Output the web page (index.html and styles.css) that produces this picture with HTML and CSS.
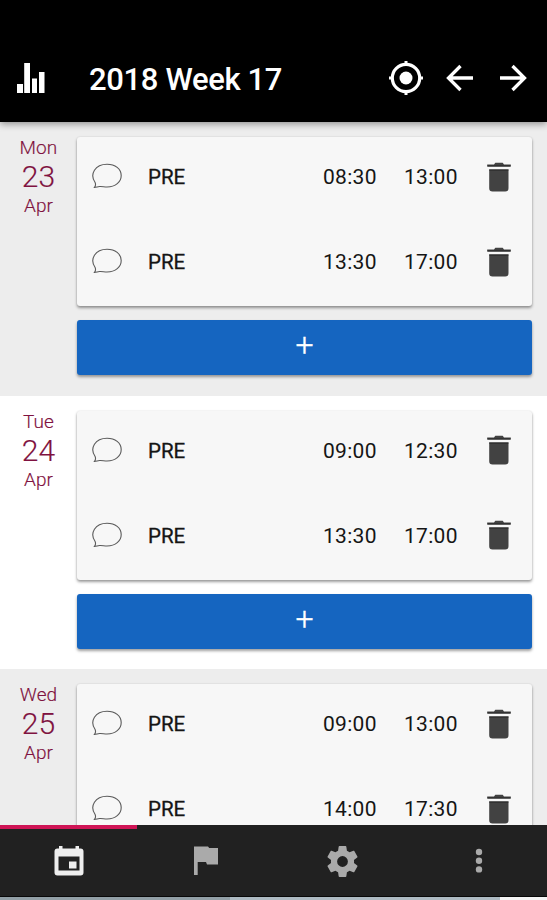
FILE: index.html
```html
<!DOCTYPE html>
<html lang="en">
<head>
<meta charset="utf-8">
<title>2018 Week 17</title>
<link rel="stylesheet" href="styles.css">
</head>
<body>
<svg width="0" height="0" class="defs">
  <symbol id="bubble" viewBox="0 0 32 28"><path d="M4 20.2C-1.500 12.500 4 2.200 16 2.200c8.200 0 14.200 4.800 14.200 11.300S24.500 25 16 25c-2.700 0-5-.7-7.200-.5-1.700-.1-3.300.8-5.300.9C4.500 24.100 4.900 22.200 4 20.200z" fill="none" stroke="#5a5a5a" stroke-width="1.100"/></symbol>
  <symbol id="trash" viewBox="0 0 24 30"><path d="M.2 2.500h6.800L8.300.7h7.400L17 2.500h6.800v2.100H.2zM2.200 7.500h19.300v18.700q0 3.300-3.300 3.300H5.500q-3.300 0-3.300-3.300z" fill="#424242"/><path d="M.5 4h23M2.200 8h19.300" stroke="#222" stroke-width="1"/></symbol>
</svg>
<div class="app">
  <header class="header">
    <svg class="stats" viewBox="0 0 28 30"><path d="M0 21h6v9H0zM7.200 0H13v30H7.200zM15 15.500h5V30h-5zM22 9h5.500v21H22z" fill="#fff"/></svg>
    <h1>2018 Week 17</h1>
    <svg class="locate" viewBox="0 0 36 36"><g fill="none" stroke="#fff"><circle cx="18" cy="18" r="13.700" stroke-width="3.200"/><path d="M18 1v4M18 31v4M1 18h4M31 18h4" stroke-width="3"/></g><circle cx="18" cy="18" r="6.500" fill="#fff"/></svg>
    <svg class="arrow" viewBox="0 0 28 28"><path d="M27 14H3M14.500 2L2.500 14l12 12" fill="none" stroke="#fff" stroke-width="3.300"/></svg>
    <svg class="arrow" viewBox="0 0 28 28"><path d="M1 14h24M13.500 2l12 12-12 12" fill="none" stroke="#fff" stroke-width="3.300"/></svg>
  </header>
  <main class="days">
    <section class="day">
      <div class="date"><span>Mon</span><strong>23</strong><span>Apr</span></div>
      <div class="content">
        <div class="card">
          <div class="entry"><svg class="bubble"><use href="#bubble"/></svg><span>PRE</span><time>08:30</time><time>13:00</time><svg class="trash"><use href="#trash"/></svg></div>
          <div class="entry"><svg class="bubble"><use href="#bubble"/></svg><span>PRE</span><time>13:30</time><time>17:00</time><svg class="trash"><use href="#trash"/></svg></div>
        </div>
        <button class="add">+</button>
      </div>
    </section>
    <section class="day white">
      <div class="date"><span>Tue</span><strong>24</strong><span>Apr</span></div>
      <div class="content">
        <div class="card">
          <div class="entry"><svg class="bubble"><use href="#bubble"/></svg><span>PRE</span><time>09:00</time><time>12:30</time><svg class="trash"><use href="#trash"/></svg></div>
          <div class="entry"><svg class="bubble"><use href="#bubble"/></svg><span>PRE</span><time>13:30</time><time>17:00</time><svg class="trash"><use href="#trash"/></svg></div>
        </div>
        <button class="add">+</button>
      </div>
    </section>
    <section class="day">
      <div class="date"><span>Wed</span><strong>25</strong><span>Apr</span></div>
      <div class="content">
        <div class="card">
          <div class="entry"><svg class="bubble"><use href="#bubble"/></svg><span>PRE</span><time>09:00</time><time>13:00</time><svg class="trash"><use href="#trash"/></svg></div>
          <div class="entry"><svg class="bubble"><use href="#bubble"/></svg><span>PRE</span><time>14:00</time><time>17:30</time><svg class="trash"><use href="#trash"/></svg></div>
        </div>
      </div>
    </section>
  </main>
  <nav class="tabs">
    <a class="tab active"><svg width="30" height="30" viewBox="0 0 30 30"><path fill-rule="evenodd" d="M5 0h3.500v2.500h13V0H25v2.500h1.500q3 0 3 3v21q0 3-3 3h-23q-3 0-3-3v-21q0-3 3-3H5zM4.500 10.500v14h21v-14zM15 15.500h7.500v7H15z" fill="#eee"/></svg></a>
    <a class="tab"><svg width="26" height="30" viewBox="0 0 26 30"><path d="M1 .5h14l1.200 1.500H25v16.500H14L13 16H4.700v13H1z" fill="#aaa"/></svg></a>
    <a class="tab"><svg width="37" height="37" viewBox="0 0 24 24"><path fill="#aaa" d="M19.430 12.980c.04-.32.07-.64.07-.98s-.03-.66-.07-.98l2.110-1.650c.19-.15.24-.42.12-.64l-2-3.460c-.12-.22-.39-.3-.61-.22l-2.490 1c-.52-.4-1.080-.73-1.690-.98l-.38-2.650C14.460 2.180 14.250 2 14 2h-4c-.25 0-.46.18-.49.42l-.38 2.650c-.61.25-1.170.59-1.690.98l-2.490-1c-.23-.09-.49 0-.61.22l-2 3.460c-.13.22-.07.49.12.64l2.110 1.650c-.04.32-.07.65-.07.98s.03.66.07.98l-2.110 1.650c-.19.15-.24.42-.12.64l2 3.460c.12.22.39.3.61.22l2.490-1c.52.4 1.080.73 1.690.98l.38 2.650c.03.24.24.42.49.42h4c.25 0 .46-.18.49-.42l.38-2.650c.61-.25 1.170-.59 1.690-.98l2.490 1c.23.09.49 0 .61-.22l2-3.460c.12-.22.07-.49-.12-.64zM12 15.500A3.500 3.500 0 1 1 12 8.500a3.500 3.500 0 0 1 0 7z"/></svg></a>
    <a class="tab"><svg width="8" height="26" viewBox="0 0 8 26"><g fill="#aaa"><circle cx="4" cy="4" r="3.200"/><circle cx="4" cy="12.700" r="3.200"/><circle cx="4" cy="21.400" r="3.200"/></g></svg></a>
  </nav>
  <div class="strip"><i></i><i></i><i></i></div>
</div>
</body>
</html>
```
FILE: styles.css
```css
* { box-sizing: border-box; }
body { margin: 0; font-family: Roboto, sans-serif; background: #ededed; }
.defs { display: block; height: 0; }
.app { width: 547px; height: 900px; display: flex; flex-direction: column; overflow: hidden; }
.header { flex: none; height: 122px; background: #000; display: flex; align-items: center; padding: 33px 20px 0 17px; box-shadow: 0 2px 7px rgba(0,0,0,.4); z-index: 1; }
.stats { width: 28px; height: 30px; margin-right: 44px; }
h1 { margin: 5px auto 0 0; color: #fff; font-size: 31px; font-weight: 500; line-height: 36px; letter-spacing: -.35px; }
.locate { width: 36px; height: 36px; margin-right: 22px; }
.arrow { width: 28px; height: 28px; }
.arrow + .arrow { margin-left: 25px; }
.days { flex: 1; min-height: 0; overflow: hidden; }
.day { height: 273.700px; display: flex; padding: 15px 15px 0 0; background: #ededed; }
.white { background: #fff; }
.date { width: 77px; display: flex; flex-direction: column; align-items: center; color: #7f1240; font-size: 19px; font-weight: 300; line-height: 22px; letter-spacing: .1px; -webkit-text-stroke: .15px #7f1240; }
.date strong { font-size: 30px; font-weight: 300; line-height: 36px; letter-spacing: 0; }
.content { flex: 1; }
.card { height: 169px; background: #f7f7f7; border-radius: 3px; box-shadow: 0 2px 3px rgba(0,0,0,.38), 0 0 2px rgba(0,0,0,.12); }
.entry { height: 80px; display: grid; grid-template-columns: 57px 175px 81px 83px 24px; align-items: center; padding-left: 14px; font-size: 21px; color: #151515; letter-spacing: .3px; }
.entry + .entry { margin-top: 5px; }
.entry > span { font-size: 20.500px; letter-spacing: 0; -webkit-text-stroke: .3px #151515; }
.bubble { width: 32px; height: 28px; margin-top: -2px; }
.trash { width: 24px; height: 30px; margin-top: -1px; }
.add { display: flex; align-items: center; justify-content: center; width: 100%; height: 55px; margin-top: 14px; padding: 0 0 5px; border: 0; border-radius: 3px; background: #1565c0; color: #fff; font: 300 32px/50px Roboto, sans-serif; -webkit-text-stroke: .3px #fff; box-shadow: 0 2px 3px rgba(0,0,0,.38); }
.tabs { flex: none; height: 72px; background: #212121; display: grid; grid-template-columns: repeat(4, 1fr); border-bottom: 1px solid #080808; z-index: 1; }
.tab { display: flex; align-items: center; justify-content: center; border-top: 4px solid #212121; padding: 0 0 3px 1px; }
.active { border-color: #cf1556; }
.strip { flex: none; height: 3px; display: grid; grid-template-columns: 230px 270px 47px; }
.strip i { background: #929fa6; }
.strip i:nth-child(2) { background: #aebbc3; }
.strip i:nth-child(3) { background: #f5f5f5; }
```
